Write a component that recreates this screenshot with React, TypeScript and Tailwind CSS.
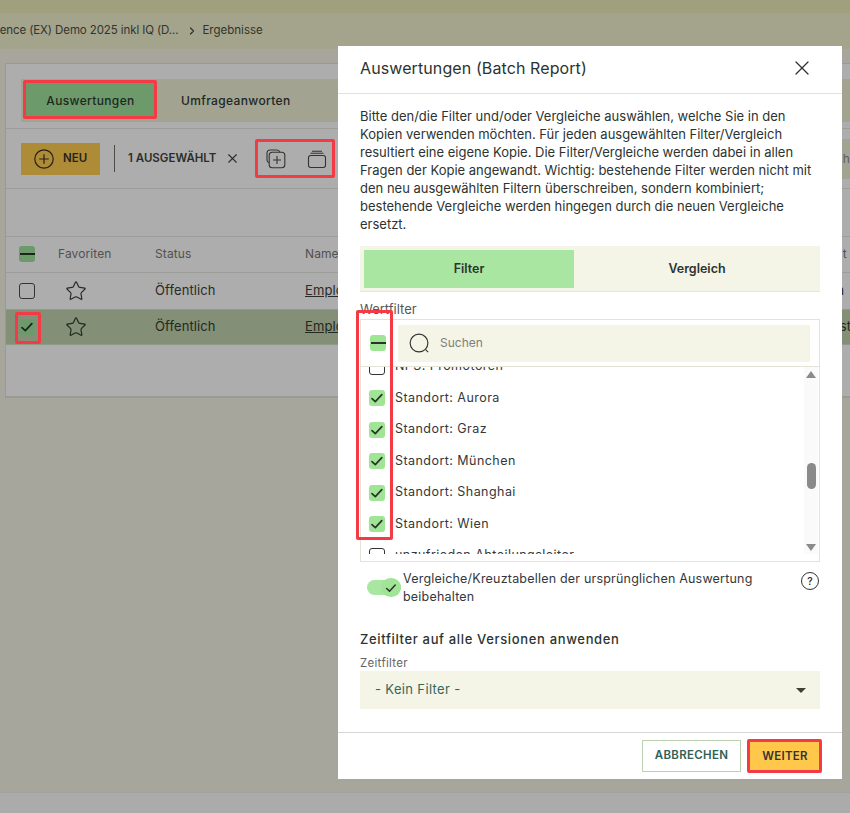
import React from 'react';
import { Star, X, ChevronRight } from 'lucide-react';

const CheckMark = ({ className = 'w-4 h-4' }: { className?: string }) => (
  <svg viewBox="0 0 16 16" className={className} fill="none" stroke="currentColor" strokeWidth="1.7" strokeLinecap="round" strokeLinejoin="round">
    <path d="M3 8.6 L6.3 11.6 L12.8 4.6" />
  </svg>
);

const Box = ({ state, dim = false }: { state: 'on' | 'off' | 'some'; dim?: boolean }) => {
  if (state === 'off') {
    return <div className={`w-4 h-4 shrink-0 rounded-[3px] border ${dim ? 'border-[#33342f]' : 'border-[#333]'}`} />;
  }
  return (
    <div className={`w-4 h-4 shrink-0 rounded-[3px] flex items-center justify-center ${dim ? 'bg-[#6d9a6b] text-[#1d261c]' : 'bg-[#a0e596] text-[#2a332a]'}`}>
      {state === 'on' ? <CheckMark /> : <div className="w-[15px] h-[2px] bg-current" />}
    </div>
  );
};

const rows = [
  { selected: false, tail: 'Maria', pad: 'pl-[7px]' },
  { selected: true, tail: 'Statistik', pad: 'pl-[10px]' },
];

const Background = () => (
  <div className="w-[850px] h-[813px] bg-[#a6a69c] flex flex-col">
    <div className="h-[13px] shrink-0 bg-[#a0a07e]" />
    <div className="h-[36px] shrink-0 bg-[#a4a48c] flex items-center text-[11.5px] text-[#33342e] whitespace-nowrap overflow-hidden">
      <span className="ml-[-3px] tracking-[-0.1px]">ience (EX) Demo 2025 inkl IQ (D...</span>
      <ChevronRight size={12} strokeWidth={2.5} className="ml-[8px] mr-[4px]" />
      <span>Ergebnisse</span>
    </div>
    <div className="mt-[14px] ml-[5px] w-[900px] h-[335px] shrink-0 bg-[#adadad] border-l border-b-2 border-t border-[#9a9a94]">
      <div className="h-[65px] border-b border-[#9c9c98] pt-[15px] pl-[15px]">
        <div className="h-[43px] bg-[#a3a392] flex items-center pl-[5px] text-[12px] font-medium text-[#20271f] tracking-[0.35px]">
          <div className="w-[130px] h-[35px] bg-[#6d9a6b] flex items-center justify-center pr-[1px]">Auswertungen</div>
          <div className="ml-[25px]">Umfrageanworten</div>
        </div>
      </div>
      <div className="h-[60px] border-b border-[#9c9c98] flex items-center pl-[15px]">
        <div className="w-[79px] h-[32px] bg-[#ae8b37] flex items-center pl-[13px] gap-[9px] text-[11.5px] font-semibold text-[#262217]">
          <svg viewBox="0 0 20 20" className="w-5 h-5" fill="none" stroke="currentColor" strokeWidth="1.2">
            <circle cx="10" cy="10" r="9.2" />
            <path d="M10 5.2 V14.8 M5.2 10 H14.8" />
          </svg>
          NEU
        </div>
        <div className="ml-[14px] w-px h-[27px] bg-[#4d4d47]" />
        <div className="ml-[13px] text-[11.5px] font-semibold text-[#2c2d2a] whitespace-nowrap">1 AUSGEWÄHLT</div>
        <X size={15} strokeWidth={1.8} className="ml-[9px] text-[#2c2d2a]" />
        <svg viewBox="0 0 20 20" className="ml-[26px] w-5 h-5 text-[#33342f]" fill="none" stroke="currentColor" strokeWidth="1.1">
          <path d="M3.2 13.8 C1.8 13.4 1 12.4 1 11 V4 C1 2.2 2.2 1 4 1 H11 C12.4 1 13.4 1.8 13.8 3.2" />
          <rect x="3.2" y="3.2" width="15.6" height="15.6" rx="3" />
          <path d="M11 7 V15 M7 11 H15" />
        </svg>
        <svg viewBox="0 0 20 20" className="ml-[21px] w-5 h-5 text-[#33342f]" fill="none" stroke="currentColor" strokeWidth="1.1">
          <rect x="1.5" y="6.5" width="17" height="12" rx="2.2" />
          <path d="M3.5 4.3 H16.5 M5 2.2 H15" />
        </svg>
        <div className="ml-auto mr-[-1px] w-[120px] h-[40px] bg-[#a3a392] flex items-center pl-[35px] text-[12px] text-[#5c5d5c]">Suchen</div>
      </div>
      <div className="h-[48px] border-b border-[#9c9c98]" />
      <div className="h-[36px] pb-[2px] border-b border-[#9c9c98] flex items-center text-[12px] tracking-[0.1px] text-[#51514d] whitespace-nowrap">
        <div className="w-[52px] pl-[13px]"><Box state="some" dim /></div>
        <div className="w-[97px]">Favoriten</div>
        <div className="w-[150px]">Status</div>
        <div className="w-[510px]">Name</div>
        <div>Inhalt</div>
      </div>
      {rows.map((r) => (
        <div key={r.tail} className={`h-[36px] flex items-center text-[13px] tracking-[0.1px] whitespace-nowrap ${r.selected ? 'bg-[#838f76] text-[#23291f] border-y border-[#8f9a86]' : 'text-[#2a2b28]'}`}>
          <div className="w-[52px] pl-[13px]"><Box state={r.selected ? 'on' : 'off'} dim /></div>
          <div className="w-[97px] pl-[7px]"><Star size={22} strokeWidth={1.3} /></div>
          <div className="w-[150px]">Öffentlich</div>
          <div className="w-[497px] underline">Employee Experience</div>
          <div className={r.pad}>{r.tail}</div>
        </div>
      ))}
    </div>
    <div className="mt-auto h-[21px] shrink-0 bg-[#ababab] border-t border-[#a2a2a0]" />
  </div>
);

const listItems: { label: string; on: boolean }[] = [
  { label: 'NPS: Promotoren', on: false },
  { label: 'Standort: Aurora', on: true },
  { label: 'Standort: Graz', on: true },
  { label: 'Standort: München', on: true },
  { label: 'Standort: Shanghai', on: true },
  { label: 'Standort: Wien', on: true },
  { label: 'unzufrieden Abteilungsleiter', on: false },
];

const Modal = () => (
  <div className="absolute left-[338px] top-[46px] w-[504px] h-[733px] bg-white flex flex-col text-[#2c3330]">
    <div className="h-[48px] shrink-0 border-b border-[#e1e1e1] flex items-center justify-between pl-[22px] pr-[28px] pb-[3px]">
      <span className="text-[16px] tracking-[0.1px] text-[#2b3431]">Auswertungen (Batch Report)</span>
      <X size={24} strokeWidth={1.3} />
    </div>
    <div className="flex-1 px-[22px] pt-[13px] w-[482px] box-content">
      <p className="text-[13px] leading-[18px] w-[460px]">
        Bitte den/die Filter und/oder Vergleiche auswählen, welche Sie in den Kopien verwenden möchten. Für jeden ausgewählten Filter/Vergleich resultiert eine eigene Kopie. Die Filter/Vergleiche werden dabei in allen Fragen der Kopie angewandt. Wichtig: bestehende Filter werden nicht mit den neu ausgewählten Filtern überschreiben, sondern kombiniert; bestehende Vergleiche werden hingegen durch die neuen Vergleiche ersetzt.
      </p>
      <div className="mt-[13px] w-[460px] h-[46px] bg-[#f4f4e7] border-b border-[#e6e6da] flex items-start pt-[4px] pl-[4px] text-[12.5px] font-semibold">
        <div className="w-[210px] h-[38px] bg-[#a8e6a1] flex items-center justify-center">Filter</div>
        <div className="w-[246px] h-[38px] flex items-center justify-center">Vergleich</div>
      </div>
      <div className="mt-[8px] mb-[1px] h-[18px] text-[13px] leading-[18px] text-[#55575a]">Wertfilter</div>
      <div className="w-[460px] h-[243px] border border-[#e3e3d6] flex flex-col">
        <div className="h-[47px] shrink-0 border-b border-[#e3e3d6] flex items-center pl-[9px] pr-[9px]">
          <Box state="some" />
          <div className="ml-[12px] flex-1 h-[37px] bg-[#f4f4e7] flex items-center pl-[11px] text-[12px] text-[#7d7f80]">
            <svg viewBox="0 0 22 22" className="w-[21px] h-[21px] text-[#333]" fill="none" stroke="currentColor" strokeWidth="1.2">
              <circle cx="10.5" cy="10.5" r="9.3" />
              <path d="M17.5 17.5 L20 20" />
            </svg>
            <span className="ml-[10px]">Suchen</span>
          </div>
        </div>
        <div className="relative flex-1 mb-[7px] overflow-hidden">
          <div className="absolute left-0 top-[-16px] right-[14px]">
            {listItems.map((item) => (
              <div key={item.label} className="h-[31.5px] flex items-center pl-[8px] text-[12.5px] tracking-[0.45px] text-[#34383a] whitespace-nowrap">
                <Box state={item.on ? 'on' : 'off'} />
                <span className="ml-[10px]">{item.label}</span>
              </div>
            ))}
          </div>
          <div className="absolute right-[1px] top-0 bottom-0 w-[14px] bg-[#fafafa] flex flex-col items-center justify-between pt-[4px] pb-[3px]">
            <div className="border-x-[5px] border-x-transparent border-b-[7px] border-b-[#8a8a8a]" />
            <div className="border-x-[5px] border-x-transparent border-t-[7px] border-t-[#8a8a8a]" />
          </div>
          <div className="absolute right-[3px] top-[96px] w-[9px] h-[26px] rounded-full bg-[#8a8a8a]" />
        </div>
      </div>
      <div className="mt-[8px] w-[460px] flex items-start">
        <div className="relative w-[36px] h-[36px] ml-[7px] shrink-0">
          <div className="absolute left-0 top-[10px] w-[34px] h-[15px] rounded-full bg-[#a8e6a1]" />
          <div className="absolute left-[14px] top-[8px] w-[20px] h-[19px] rounded-full bg-[#a0e596] flex items-center justify-center text-[#2a332a]">
            <CheckMark className="w-3.5 h-3.5" />
          </div>
        </div>
        <div className="text-[12.5px] leading-[18px] tracking-[0.2px] w-[380px] text-[#34383a]">
          Vergleiche/Kreuztabellen der ursprünglichen Auswertung beibehalten
        </div>
        <div className="ml-[18px] mt-[2px] w-[18px] h-[18px] shrink-0 rounded-full border border-[#333] flex items-center justify-center text-[10px] font-semibold text-[#333]">?</div>
      </div>
      <div className="mt-[24px] text-[13px] leading-[18px] font-[450] tracking-[0.65px] text-[#2b3431]">Zeitfilter auf alle Versionen anwenden</div>
      <div className="mt-[8px] text-[11.5px] leading-[14px] tracking-[0.3px] text-[#666]">Zeitfilter</div>
      <div className="mt-[1px] w-[460px] h-[38px] bg-[#f4f4e7] flex items-center justify-between pl-[15px] pr-[14px] text-[13px] tracking-[0.35px] text-[#33685a]">
        <span>- Kein Filter -</span>
        <div className="border-x-[5px] border-x-transparent border-t-[5px] border-t-[#3f4038]" />
      </div>
    </div>
    <div className="h-[47px] shrink-0 border-t border-[#d6d6d6] flex items-start pt-[7px] pl-[304px] gap-[8px]">
      <div className="w-[99px] h-[32px] border border-[#bcd0b0] flex items-center justify-center text-[11.5px] font-semibold tracking-[0.3px] text-[#2f6156]">ABBRECHEN</div>
      <div className="w-[72px] h-[31px] mt-[1px] bg-[#ffc84a] flex items-center justify-center text-[11.5px] font-semibold tracking-[0.3px] text-[#333]">WEITER</div>
    </div>
  </div>
);

// rote Markierungen aus dem Screenshot
const marks = [
  'left-[23px] top-[80px] w-[134px] h-[39px]',
  'left-[255px] top-[139px] w-[80px] h-[39px]',
  'left-[15px] top-[312px] w-[26px] h-[32px]',
  'left-[356px] top-[310px] w-[37px] h-[230px]',
  'left-[747px] top-[739px] w-[75px] h-[34px]',
];

export default function App() {
  return (
    <div className="relative w-[850px] h-[813px] overflow-hidden font-['Inter',sans-serif]">
      <Background />
      <Modal />
      {marks.map((m) => (
        <div key={m} className={`absolute border-[3px] border-[#f43a45] rounded-[2px] ${m}`} />
      ))}
    </div>
  );
}
